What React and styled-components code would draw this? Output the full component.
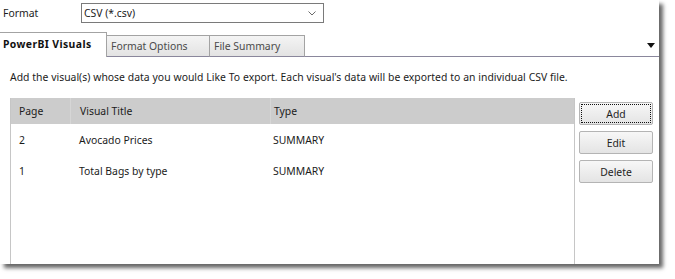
import React from "react";
import styled, { createGlobalStyle } from "styled-components";

const Global = createGlobalStyle`
  html, body { margin: 0; padding: 0; background: #ffffff; }
  body { font-family: "Noto Sans", "Open Sans", sans-serif; font-size: 10.4px; color: #1b1b1b; }
`;

const Page = styled.div`
  width: 675px;
  height: 279px;
  background: #ffffff;
`;

const Window = styled.div`
  width: 659px;
  height: 264px;
  background: #ffffff;
  box-shadow: 4px 4px 4px rgba(0, 0, 0, 0.6);
  display: flex;
  flex-direction: column;
  overflow: hidden;
`;

const FormatRow = styled.div`
  display: flex;
  align-items: center;
  height: 20px;
  margin-top: 3px;
`;

const Label = styled.span`
  width: 78px;
  padding-left: 3px;
`;

const Combo = styled.div`
  width: 232px;
  height: 18px;
  border: 1px solid #7a7a7a;
  display: flex;
  align-items: center;
  justify-content: space-between;
  padding: 0 7px 0 2px;
  box-sizing: content-box;
`;

const TabStrip = styled.div`
  display: flex;
  align-items: flex-end;
  height: 25px;
  margin-top: 9px;
`;

const Tab = styled.div`
  box-sizing: border-box;
  height: ${(p) => (p.$active ? "25px" : "22px")};
  width: ${(p) => p.$w}px;
  display: flex;
  align-items: center;
  padding-left: ${(p) => (p.$active ? "3px" : "4px")};
  padding-bottom: ${(p) => (p.$active ? "2px" : "1px")};
  border-top: 1px solid #a3a3a3;
  border-right: 1px solid #a3a3a3;
  border-bottom: ${(p) => (p.$active ? "none" : "1px solid #8a879c")};
  background: ${(p) => (p.$active ? "#ffffff" : "linear-gradient(#f4f4f4, #e3e3e3)")};
  font-weight: ${(p) => (p.$active ? 700 : 400)};
  letter-spacing: ${(p) => (p.$active ? "0.4px" : "0")};
  color: ${(p) => (p.$active ? "#111111" : "#4a4a4a")};
`;

const TabFiller = styled.div`
  flex: 1;
  height: 22px;
  box-sizing: border-box;
  border-bottom: 1px solid #8a879c;
  display: flex;
  justify-content: flex-end;
  align-items: center;
  padding-right: 4px;
`;

const Description = styled.div`
  height: 14px;
  line-height: 14px;
  margin-top: 13px;
  padding-left: 10px;
  word-spacing: 0.2px;
`;

const Body = styled.div`
  flex: 1;
  display: flex;
  margin-top: 14px;
`;

const List = styled.div`
  margin-left: 10px;
  width: 565px;
  box-sizing: border-box;
  border-left: 1px solid #c6c6c6;
  border-right: 1px solid #c6c6c6;
  display: flex;
  flex-direction: column;
`;

const Row = styled.div`
  display: grid;
  grid-template-columns: 59px 200px 1fr;
  height: ${(p) => (p.$header ? "26px" : "31px")};
  align-items: center;
  background: ${(p) => (p.$header ? "#cccccc" : "transparent")};
`;

const Cell = styled.div`
  padding-left: ${(p) => p.$pad}px;
  height: 100%;
  display: flex;
  align-items: center;
  box-sizing: border-box;
  border-left: ${(p) => (p.$sep ? "1px solid #d6d6d6" : "none")};
`;

const Buttons = styled.div`
  display: flex;
  flex-direction: column;
  gap: 6px;
  margin-left: 4px;
  padding-top: 4px;
`;

const Button = styled.div`
  position: relative;
  width: 74px;
  height: 23px;
  box-sizing: border-box;
  border: 1px solid #b4b4b4;
  border-radius: 2px;
  background: linear-gradient(#f7f7f7, #e4e4e4);
  display: flex;
  align-items: center;
  justify-content: center;
  color: #1e1e1e;
  ${(p) =>
    p.$focus &&
    `&::after {
      content: "";
      position: absolute;
      inset: 1px;
      border: 1px dotted #111111;
    }`}
`;

const Chevron = () => (
  <svg width="8" height="5" viewBox="0 0 8 5">
    <path d="M0.5 0.5 L4 4 L7.5 0.5" fill="none" stroke="#6a6a6a" strokeWidth="1" />
  </svg>
);

const Triangle = () => (
  <svg width="8" height="5" viewBox="0 0 8 5">
    <path d="M0 0 L8 0 L4 5 Z" fill="#111111" />
  </svg>
);

const rows = [
  { page: "2", title: "Avocado Prices", type: "SUMMARY" },
  { page: "1", title: "Total Bags by type", type: "SUMMARY" },
];

export default function App() {
  return (
    <>
      <Global />
      <Page>
        <Window>
          <FormatRow>
            <Label>Format</Label>
            <Combo>
              <span>CSV (*.csv)</span>
              <Chevron />
            </Combo>
          </FormatRow>
          <TabStrip>
            <Tab $active $w={107}>PowerBI Visuals</Tab>
            <Tab $w={103}>Format Options</Tab>
            <Tab $w={95}>File Summary</Tab>
            <TabFiller>
              <Triangle />
            </TabFiller>
          </TabStrip>
          <Description>
            Add the visual(s) whose data you would Like To export. Each visual's data will be exported to an individual CSV file.
          </Description>
          <Body>
            <List>
              <Row $header>
                <Cell $pad={8}>Page</Cell>
                <Cell $pad={9} $sep>Visual Title</Cell>
                <Cell $pad={3} $sep>Type</Cell>
              </Row>
              {rows.map((r) => (
                <Row key={r.title}>
                  <Cell $pad={8}>{r.page}</Cell>
                  <Cell $pad={9}>{r.title}</Cell>
                  <Cell $pad={3}>{r.type}</Cell>
                </Row>
              ))}
            </List>
            <Buttons>
              <Button $focus>Add</Button>
              <Button>Edit</Button>
              <Button>Delete</Button>
            </Buttons>
          </Body>
        </Window>
      </Page>
    </>
  );
}
